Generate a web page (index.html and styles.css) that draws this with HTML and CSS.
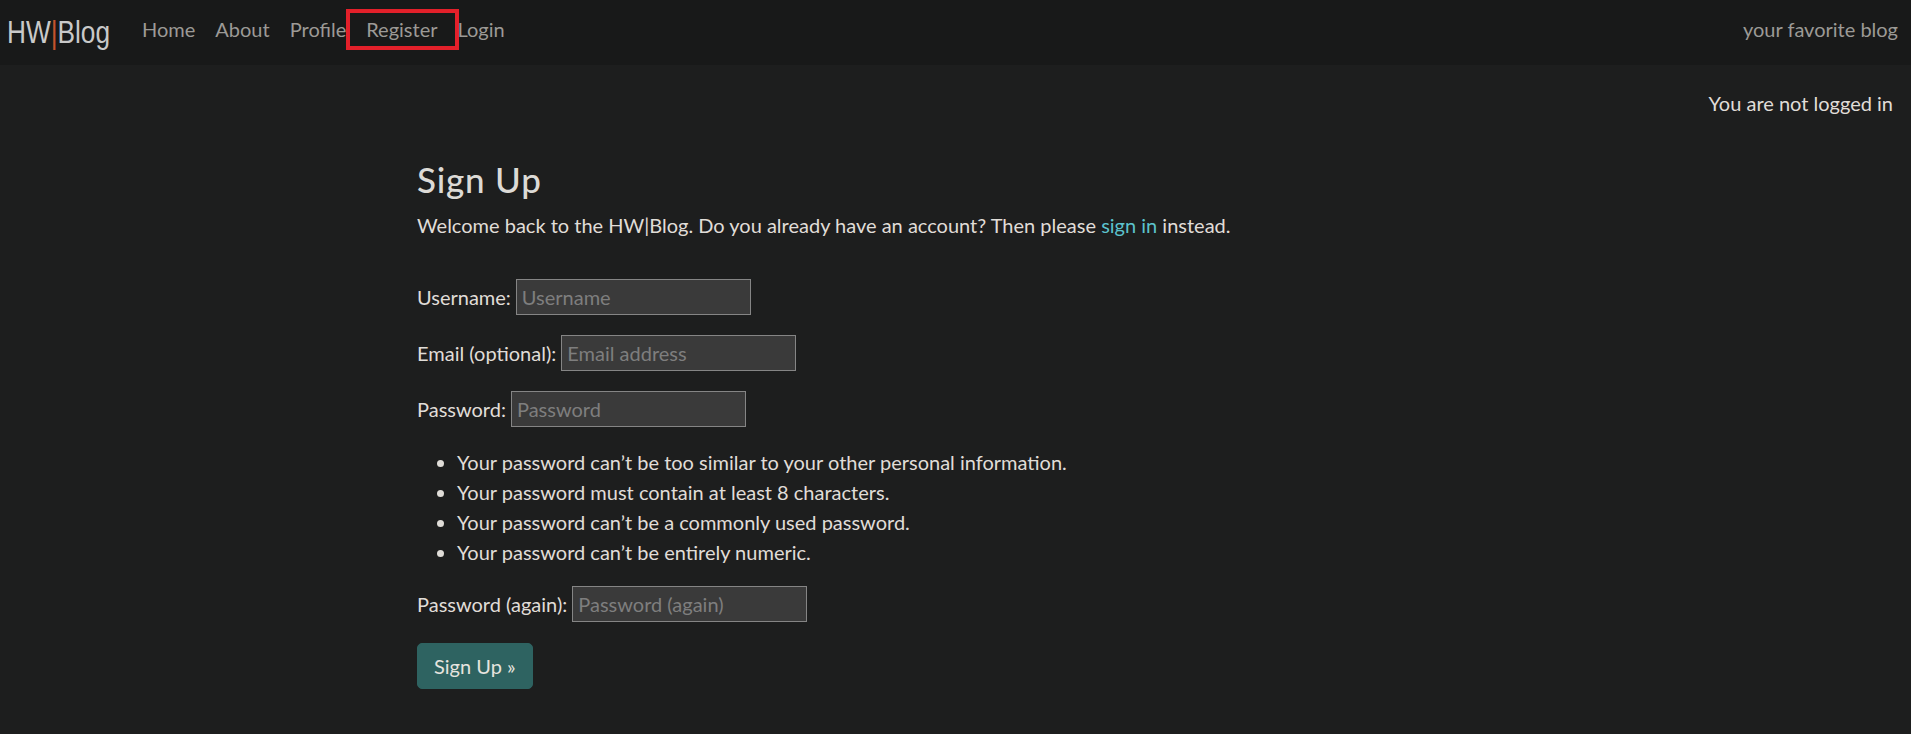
FILE: index.html
```html
<!DOCTYPE html>
<html lang="en">
<head>
<meta charset="utf-8">
<title>HW|Blog - Sign Up</title>
<link rel="stylesheet" href="styles.css">
</head>
<body>
<nav class="navbar">
  <a class="brand" href="#"><span class="brand-inner">HW<span class="bar">|</span>Blog</span></a>
  <ul class="nav-links">
    <li><a class="nav-link" href="#">Home</a></li>
    <li><a class="nav-link" href="#">About</a></li>
    <li><a class="nav-link" href="#">Profile</a></li>
    <li><a class="nav-link active" href="#">Register</a></li>
    <li><a class="nav-link" href="#">Login</a></li>
  </ul>
  <span class="tagline">your favorite blog</span>
</nav>
<div class="status">You are not logged in</div>
<main class="content">
  <h3 class="title">Sign Up</h3>
  <p class="intro">Welcome back to the HW|Blog. Do you already have an account? Then please <a class="link" href="#">sign in</a> instead.</p>
  <form class="form">
    <p class="row"><label for="u">Username:</label><input id="u" class="field" type="text" placeholder="Username"></p>
    <p class="row"><label for="e">Email (optional):</label><input id="e" class="field" type="email" placeholder="Email address"></p>
    <p class="row"><label for="p1">Password:</label><input id="p1" class="field" type="password" placeholder="Password"></p>
    <ul class="help">
      <li>Your password can’t be too similar to your other personal information.</li>
      <li>Your password must contain at least 8 characters.</li>
      <li>Your password can’t be a commonly used password.</li>
      <li>Your password can’t be entirely numeric.</li>
    </ul>
    <p class="row row-last"><label for="p2">Password (again):</label><input id="p2" class="field" type="password" placeholder="Password (again)"></p>
    <button class="btn" type="submit">Sign Up »</button>
  </form>
</main>
</body>
</html>
```

FILE: styles.css
```css
html, body {
  margin: 0;
  padding: 0;
}
body {
  background: #1d1e1e;
  color: #e0ddd8;
  font-family: Lato, "Open Sans", sans-serif;
  font-size: 20px;
  line-height: 30px;
  min-height: 734px;
}
a { text-decoration: none; }

.navbar {
  display: flex;
  align-items: center;
  height: 65px;
  box-sizing: border-box;
  padding: 0 13px 7px 7px;
  background: #181919;
}
.brand {
  display: block;
  width: 104px;
  height: 40px;
  margin-right: 21px;
  margin-top: 6px;
  color: #c9c9c9;
  font-family: "Liberation Sans", Arial, sans-serif;
  font-size: 32px;
  line-height: 40px;
  white-space: nowrap;
}
.brand-inner {
  display: inline-block;
  transform: scaleX(0.82);
  transform-origin: left center;
}
.brand .bar { color: #c4532c; }

.nav-links {
  display: flex;
  list-style: none;
  margin: 0;
  padding: 0;
  flex: 1;
}
.nav-link {
  position: relative;
  display: block;
  padding: 0 10px;
  line-height: 30px;
  color: #9c9a96;
}
.nav-link.active::after {
  content: "";
  position: absolute;
  left: -10px;
  right: -11px;
  top: -5px;
  bottom: -6px;
  border: 4px solid #e3202a;
}
.tagline {
  color: #9c9a96;
  line-height: 30px;
}

.status {
  text-align: right;
  padding: 23px 18px 0 0;
  line-height: 30px;
}

.content {
  padding: 40px 0 0 417px;
}
.title {
  margin: 0 0 10px;
  font-size: 35px;
  line-height: 42px;
  font-weight: 500;
  letter-spacing: 0.8px;
  color: #dcdad6;
}
.intro {
  margin: 0 0 39px;
}
.link { color: #5cc3cd; }

.form { margin: 0; }
.row {
  display: flex;
  align-items: center;
  height: 36px;
  margin: 0 0 20px;
}
.row-last { margin-bottom: 21px; }
.field {
  box-sizing: border-box;
  width: 235px;
  height: 36px;
  margin: 0 0 0 5px;
  padding: 0 5px;
  background: #3a3a3a;
  border: 1px solid #858585;
  border-radius: 0;
  color: #e0ddd8;
  font-family: inherit;
  font-size: 20px;
}
.field::placeholder { color: #7e7e7e; }

.help {
  margin: 3px 0 19px;
  padding-left: 40px;
}
.help li { line-height: 30px; }

.btn {
  display: block;
  margin: 0;
  padding: 7px 16px;
  background: #2e6361;
  border: 1px solid #2e6361;
  border-radius: 5px;
  color: #e6e4df;
  font-family: inherit;
  font-size: 20px;
  line-height: 30px;
}
```
